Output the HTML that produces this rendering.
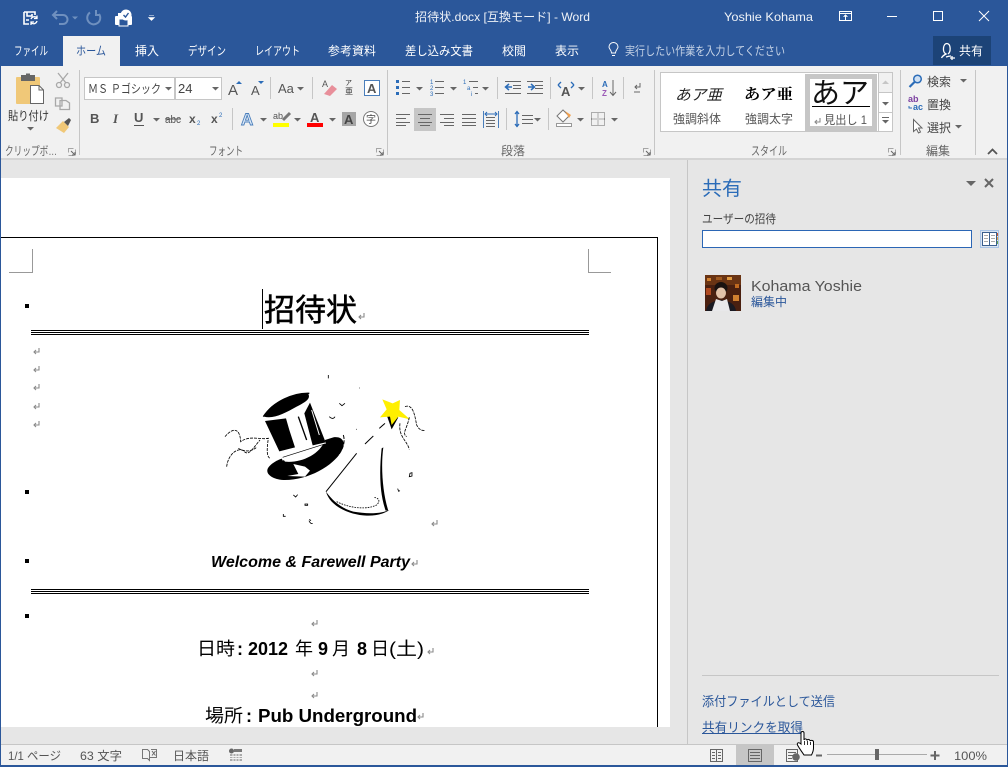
<!DOCTYPE html>
<html lang="ja"><head><meta charset="utf-8"><title>招待状.docx - Word</title>
<style>
html,body{margin:0;padding:0;background:#e6e6e6;width:1008px;height:767px;overflow:hidden}
svg{display:block;position:absolute;left:0;top:0}
text{font-family:"Liberation Sans","Noto Sans CJK JP",sans-serif;font-size:12px;fill:#444}
.w{fill:#fff}.b{fill:#2b579a}.k{fill:#000}
.tab{fill:#fff;font-size:12px}
.grp{fill:#666;font-size:12px}
.l{stroke:#666;fill:none;stroke-width:1}
.sep{stroke:#c6c6c6;stroke-width:1}
.ar{fill:#666}
.cr{fill:none;stroke:#999;stroke-width:1}
.d{font-size:18px;fill:#000}
.db{font-size:18px;font-weight:700;fill:#000}
</style></head><body>
<svg width="1008" height="767" viewBox="0 0 1008 767" xmlns="http://www.w3.org/2000/svg">
<defs>
<g id="ret"><path d="M6 0V4H1M3 2L1 4L3 6" fill="none" stroke="#8a8a8a" stroke-width="1.100"/></g>
<g id="lau"><path d="M.5 .5H7.5V7.5H.5Z" fill="none" stroke="#a5a5a5" stroke-dasharray="5 3"/><path d="M3 3L7 7M7 4V7H4" fill="none" stroke="#666"/></g>
<path id="da" d="M0 0H7L3.5 3.5Z" fill="#666"/>
</defs>
<!-- base -->
<rect width="1008" height="767" fill="#e6e6e6"/>
<rect width="1008" height="66" fill="#2b579a"/>
<rect y="66" width="1008" height="92" fill="#f1f1f1"/>
<rect y="158" width="1008" height="2" fill="#d4d4d4"/>
<rect x="63" y="36" width="57" height="30" fill="#f1f1f1"/>
<!-- QAT -->
<g fill="none" stroke="#fff" stroke-width="1.600">
<path d="M24 12H35V15M24 12V24H29M27 12V16H32V14M26 20H29"/>
<path d="M31 19A3.500 3.500 0 0 1 37 18M37 15.500V18.500H34M37 21A3.500 3.500 0 0 1 31.500 23M31 25V22H34" stroke-width="1.300"/>
</g>
<g fill="none" stroke="#6f90bf" stroke-width="2">
<path d="M54 15H63A4.500 4.500 0 0 1 63 24H59M57 11L53 15L57 19"/>
<path d="M90 12.500A6.500 6.500 0 1 0 99 14M96 10V15H100" />
</g>
<path d="M72 16.500H78L75 19.500Z" fill="#6f90bf"/>
<g>
<rect x="115" y="16" width="17" height="9" fill="#fff" rx="1"/>
<rect x="119" y="19" width="9" height="7" fill="#2b579a" stroke="#fff"/>
<rect x="118" y="13" width="6" height="4" fill="#fff"/>
<circle cx="126" cy="15" r="5.500" fill="#fff"/>
<path d="M123.500 15L125.500 17L128.500 13" fill="none" stroke="#2b579a" stroke-width="1.400"/>
</g>
<path d="M149 15.500H154M148.500 17.500H154.500L151.500 20.500Z" fill="#fff" stroke="#fff" stroke-width=".6"/>
<!-- title -->
<text x="415" y="21" class="w" textLength="175" lengthAdjust="spacingAndGlyphs" fill-opacity=".92">招待状.docx [互換モード] - Word</text>
<text x="724" y="21" class="w" textLength="89" lengthAdjust="spacingAndGlyphs" fill-opacity=".92">Yoshie Kohama</text>
<g fill="none" stroke="#fff" shape-rendering="crispEdges">
<path d="M839.500 11.500H851.500V20.500H839.500ZM839.500 13.500H851.500M845.500 20V15.500M843.500 17L845.500 15L847.500 17"/>
<path d="M887 16.500H897"/>
<rect x="933.500" y="11.500" width="9" height="9"/>
</g>
<path d="M979 11L989 21M989 11L979 21" stroke="#fff" fill="none"/>
<!-- tabs -->
<text x="14" y="55" class="tab" textLength="34" lengthAdjust="spacingAndGlyphs">ファイル</text>
<text x="76" y="55" class="b" textLength="30" lengthAdjust="spacingAndGlyphs">ホーム</text>
<text x="135" y="55" class="tab" textLength="24" lengthAdjust="spacingAndGlyphs">挿入</text>
<text x="188" y="55" class="tab" textLength="38" lengthAdjust="spacingAndGlyphs">デザイン</text>
<text x="255" y="55" class="tab" textLength="45" lengthAdjust="spacingAndGlyphs">レイアウト</text>
<text x="328" y="55" class="tab" textLength="48" lengthAdjust="spacingAndGlyphs">参考資料</text>
<text x="405" y="55" class="tab" textLength="68" lengthAdjust="spacingAndGlyphs">差し込み文書</text>
<text x="502" y="55" class="tab" textLength="24" lengthAdjust="spacingAndGlyphs">校閲</text>
<text x="555" y="55" class="tab" textLength="24" lengthAdjust="spacingAndGlyphs">表示</text>
<path d="M611.500 53C611.500 50 609 49 609 47A4.500 4.500 0 0 1 618 47C618 49 615.500 50 615.500 53ZM612 55.500H615" fill="none" stroke="#fff"/>
<text x="625" y="55" style="fill:#c6d3e6" textLength="160" lengthAdjust="spacingAndGlyphs">実行したい作業を入力してください</text>
<rect x="933" y="36" width="58" height="29" fill="#1c4377"/>
<path d="M948 54C951 52 951 44 947 43.500C943 43.500 942 52 946 54C944 55 942.500 56 941.500 58M946 57C949 56 951 56 951 56M952 56V60M950 58H955" fill="none" stroke="#fff" stroke-width="1.300"/>
<text x="959" y="55" class="w" textLength="24" lengthAdjust="spacingAndGlyphs">共有</text>
<!-- clipboard group -->
<rect x="16" y="77" width="24" height="27" fill="#f0c878" rx="1"/>
<rect x="21" y="75" width="14" height="6" fill="#666"/><rect x="26" y="73.500" width="4" height="3" fill="#666"/>
<path d="M30.500 85.500H39L43.500 90V103.500H30.500Z" fill="#fff" stroke="#666"/>
<path d="M39 86V90H43" fill="none" stroke="#666"/>
<text x="8" y="120" style="fill:#333" textLength="41" lengthAdjust="spacingAndGlyphs">貼り付け</text>
<use href="#da" x="27" y="127"/>
<g fill="none" stroke="#a8a8a8" stroke-width="1.300">
<path d="M58 73L66 83M68 73L60 83"/><circle cx="59" cy="85" r="2.500"/><circle cx="67" cy="85" r="2.500"/>
<path d="M55.500 98H62L62 106H55.500ZM60 100.500H66L69.500 103V109.500H60Z" fill="#f1f1f1"/>
</g>
<path d="M56 128L63 121L69 127L64 133Z" fill="#f0c878"/><path d="M64 122L69 118L71 120L68 126Z" fill="#555"/>
<text x="5" y="155" class="grp" textLength="52" lengthAdjust="spacingAndGlyphs">クリップボ…</text>
<use href="#lau" x="68" y="148"/>
<g shape-rendering="crispEdges">
<path class="sep" d="M79.500 70V155M387.500 70V155M654.500 70V155M900.500 70V155M975.500 70V155"/>
<path class="sep" d="M270.500 77V99M312.500 77V99M232.500 108V130M497.500 77V99M550.500 77V99M592.500 77V99M623.500 77V99M506.500 108V130M548.500 108V130"/>
<rect x="84.500" y="77.500" width="90" height="22" fill="#fff" stroke="#c6c6c6"/>
<rect x="175.500" y="77.500" width="46" height="22" fill="#fff" stroke="#c6c6c6"/>
</g>
<text x="88" y="93" textLength="73" lengthAdjust="spacingAndGlyphs">ＭＳ Ｐゴシック</text>
<use href="#da" x="165" y="87"/>
<text x="178" y="93" style="font-size:13px">24</text>
<use href="#da" x="212" y="87"/>
<!-- font row1 -->
<text x="228" y="95" style="font-size:15px;fill:#555">A</text>
<path d="M236 84H242L239 81Z" fill="#2b6cb8"/>
<text x="251" y="95" style="font-size:13px;fill:#555">A</text>
<path d="M258 81H264L261 84Z" fill="#2b6cb8"/>
<text x="278" y="93" style="font-size:13px;fill:#555">Aa</text>
<use href="#da" x="297" y="87"/>
<text x="322" y="87" style="font-size:9px;fill:#555">A</text>
<path d="M324 94L332 85L337 89L330 96Z" fill="#e88f9a"/>
<text x="345" y="85" style="font-size:7px;fill:#333">ア</text>
<text x="345" y="94" style="font-size:8px;fill:#333">亜</text>
<rect x="364.500" y="80.500" width="15" height="15" fill="#fff" stroke="#4a7ebb"/>
<text x="367" y="93" style="font-size:13px;font-weight:700;fill:#555">A</text>
<!-- font row2 -->
<text x="90" y="123" style="font-size:13px;font-weight:700;fill:#555">B</text>
<text x="113" y="123" style="font-size:13px;font-style:italic;font-weight:700;font-family:'Liberation Serif',serif;fill:#555">I</text>
<text x="134" y="122" style="font-size:13px;font-weight:700;fill:#555">U</text>
<path d="M134 125.500H144" stroke="#555"/>
<use href="#da" x="153" y="118"/>
<text x="165" y="123" style="font-size:11px;fill:#555" textLength="16" lengthAdjust="spacingAndGlyphs">abc</text>
<path d="M165 119H181" stroke="#555"/>
<text x="189" y="123" style="font-size:12px;font-weight:700;fill:#555">x</text><text x="197" y="125" style="font-size:6px;fill:#2b6cb8">2</text>
<text x="211" y="123" style="font-size:12px;font-weight:700;fill:#555">x</text><text x="219" y="117" style="font-size:6px;fill:#2b6cb8">2</text>
<text x="241" y="125" style="font-size:17px;font-weight:700;fill:#dce9f7;stroke:#4a7ebb;stroke-width:.9">A</text>
<use href="#da" x="260" y="118"/>
<text x="273" y="119" style="font-size:9px;fill:#555">ab</text>
<path d="M283 120L290 113" stroke="#777" stroke-width="3"/>
<rect x="273" y="123" width="16" height="4" fill="#ff0"/>
<use href="#da" x="294" y="118"/>
<text x="310" y="122" style="font-size:13px;font-weight:700;fill:#555">A</text>
<rect x="307" y="123" width="16" height="4" fill="#f00"/>
<use href="#da" x="329" y="118"/>
<rect x="342" y="112" width="14" height="14" fill="#a6a6a6"/>
<text x="344" y="124" style="font-size:13px;font-weight:700;fill:#444">A</text>
<circle cx="371" cy="119" r="7.500" fill="#fff" stroke="#777"/>
<text x="366" y="123" style="font-size:10px;fill:#444">字</text>
<!-- paragraph row1 -->
<g shape-rendering="crispEdges">
<path class="l" d="M402 81.500H410M402 87.500H410M402 93.500H410M435 81.500H444M435 87.500H444M435 93.500H444M469 81.500H478M473 87.500H478M475 93.500H478"/>
<rect x="396" y="80" width="3" height="3" fill="#2b6cb8"/><rect x="396" y="86" width="3" height="3" fill="#2b6cb8"/><rect x="396" y="92" width="3" height="3" fill="#2b6cb8"/>
</g>
<text x="430" y="84" style="font-size:6px;fill:#2b6cb8">1</text><text x="430" y="90" style="font-size:6px;fill:#2b6cb8">2</text><text x="430" y="96" style="font-size:6px;fill:#2b6cb8">3</text>
<text x="463" y="84" style="font-size:6px;fill:#2b6cb8">1</text><text x="467" y="90" style="font-size:6px;fill:#2b6cb8">a</text><text x="471" y="96" style="font-size:6px;fill:#2b6cb8">i</text>
<use href="#da" x="416" y="87"/><use href="#da" x="450" y="87"/><use href="#da" x="482" y="87"/>
<g shape-rendering="crispEdges"><path class="l" d="M505 81.500H521M513 85.500H521M513 88.500H521M505 93.500H521M527 81.500H543M535 85.500H543M535 88.500H543M527 93.500H543"/></g>
<path d="M512 87H506M509 84L505.500 87L509 90" fill="none" stroke="#2b6cb8" stroke-width="1.500"/>
<path d="M528 87H534M531 84L534.500 87L531 90" fill="none" stroke="#2b6cb8" stroke-width="1.500"/>
<text x="561" y="96" style="font-size:13px;font-weight:700;fill:#555">A</text>
<path d="M558 85L561 82M558 85L561 88M574 85L571 82M574 85L571 88" fill="none" stroke="#2b6cb8" stroke-width="1.300"/>
<use href="#da" x="578" y="87"/>
<text x="602" y="87" style="font-size:8px;font-weight:700;fill:#2b6cb8">A</text>
<text x="602" y="96" style="font-size:8px;font-weight:700;fill:#9b59b6">Z</text>
<path d="M613 80V95M610 92L613 95.500L616 92" fill="none" stroke="#666"/>
<path d="M640 83V87H635M637 85L635 87L637 89M634 92H640" fill="none" stroke="#666"/>
<!-- paragraph row2 -->
<rect x="414" y="108" width="22" height="23" fill="#c6c6c6"/>
<g shape-rendering="crispEdges">
<path class="l" d="M396 114.500H410M396 118.500H406M396 122.500H410M396 125.500H406M418 114.500H432M420 118.500H430M418 122.500H432M420 125.500H430M440 114.500H454M444 118.500H454M440 122.500H454M444 125.500H454M462 114.500H476M462 118.500H476M462 122.500H476M462 125.500H476"/>
<path class="l" d="M486 117.500H495M486 120.500H495M486 123.500H495M486 126.500H495M522 115.500H533M522 119.500H533M522 123.500H533"/>
<path d="M483.500 111V128M498.500 111V128" stroke="#4a7ebb" fill="none"/>
</g>
<path d="M485 114H497M487 112L485 114L487 116M495 112L497 114L495 116" fill="none" stroke="#2b6cb8"/>
<path d="M517 112V127M515 114L517 111.500L519 114M515 124L517 126.500L519 124" fill="none" stroke="#2b6cb8" stroke-width="1.300"/>
<use href="#da" x="534" y="118"/>
<path d="M557 116L563 110L569 116L563 122Z" fill="#fff" stroke="#777"/><path d="M565 111L571 115L569 118Z" fill="#f0a050"/>
<rect x="556.500" y="123.500" width="15" height="3" fill="#fff" stroke="#999"/>
<use href="#da" x="577" y="118"/>
<path d="M591.500 112.500H604.500V125.500H591.500ZM598 112.500V125.500M591.500 119H604.500" fill="none" stroke="#666" stroke-dasharray="1 1" shape-rendering="crispEdges"/>
<use href="#da" x="611" y="118"/>
<text x="501" y="155" class="grp" textLength="24" lengthAdjust="spacingAndGlyphs">段落</text>
<text x="209" y="155" class="grp" textLength="34" lengthAdjust="spacingAndGlyphs">フォント</text>
<use href="#lau" x="376" y="148"/>
<use href="#lau" x="643" y="148"/>
<!-- styles -->
<rect x="660.500" y="72.500" width="232" height="59" fill="#fff" stroke="#c6c6c6" shape-rendering="crispEdges"/>
<rect x="807.500" y="76.500" width="67" height="52" fill="#fff" stroke="#c6c6c6" stroke-width="5" shape-rendering="crispEdges"/>
<g shape-rendering="crispEdges">
<rect x="878.500" y="72.500" width="14" height="20" fill="#f1f1f1" stroke="#c6c6c6"/>
<rect x="878.500" y="92.500" width="14" height="20" fill="#fff" stroke="#c6c6c6"/>
<rect x="878.500" y="112.500" width="14" height="19" fill="#fff" stroke="#c6c6c6"/>
</g>
<path d="M882 84H889L885.500 80.500Z" fill="#c6c6c6"/>
<use href="#da" x="882" y="102"/>
<path d="M882 117.500H889" stroke="#666"/><use href="#da" x="882" y="120"/>
<text x="675" y="100" style="font-size:15px;font-style:italic;fill:#222" textLength="47" lengthAdjust="spacingAndGlyphs">あア亜</text>
<text x="673" y="123" style="fill:#555" textLength="48" lengthAdjust="spacingAndGlyphs">強調斜体</text>
<text x="744" y="99" style="font-size:15px;font-weight:700;font-family:'Noto Serif CJK SC','Liberation Serif',serif;fill:#000" textLength="49" lengthAdjust="spacingAndGlyphs">あア亜</text>
<text x="745" y="123" style="fill:#555" textLength="48" lengthAdjust="spacingAndGlyphs">強調太字</text>
<text x="811" y="103" style="font-size:29px;fill:#111" textLength="58" lengthAdjust="spacingAndGlyphs">あア</text>
<path d="M812 106.500H870" stroke="#000" shape-rendering="crispEdges"/>
<use href="#ret" x="814" y="118"/>
<text x="824" y="124" style="fill:#555" textLength="43" lengthAdjust="spacingAndGlyphs">見出し 1</text>
<text x="751" y="155" class="grp" textLength="36" lengthAdjust="spacingAndGlyphs">スタイル</text>
<use href="#lau" x="888" y="148"/>
<!-- edit -->
<circle cx="917.500" cy="79" r="3.800" fill="#cfe0f3" stroke="#2b6cb8" stroke-width="1.500"/>
<path d="M914.500 82L909.500 87" stroke="#2b6cb8" stroke-width="2.200"/>
<text x="927" y="86" style="fill:#444" textLength="24" lengthAdjust="spacingAndGlyphs">検索</text>
<use href="#da" x="960" y="79"/>
<text x="908" y="102" style="font-size:9px;font-weight:700;fill:#7b3fa0">ab</text>
<text x="913" y="110" style="font-size:9px;font-weight:700;fill:#2b6cb8">ac</text>
<path d="M909 106V108H912" fill="none" stroke="#2b6cb8"/>
<text x="927" y="109" style="fill:#444" textLength="24" lengthAdjust="spacingAndGlyphs">置換</text>
<path d="M913.500 119.500V131.500L916.500 129L918.500 133L920.500 132L918.500 128H922Z" fill="#fff" stroke="#666"/>
<text x="927" y="132" style="fill:#444" textLength="24" lengthAdjust="spacingAndGlyphs">選択</text>
<use href="#da" x="955" y="125"/>
<text x="926" y="155" class="grp" textLength="24" lengthAdjust="spacingAndGlyphs">編集</text>
<path d="M988 154L992.500 149.500L997 154" fill="none" stroke="#555" stroke-width="1.800"/>
<!-- document page -->
<rect x="1" y="178" width="669" height="549" fill="#fff"/>
<g shape-rendering="crispEdges">
<path d="M0 237.500H657.500V727" fill="none" stroke="#000"/>
<path class="cr" d="M32.500 249V272.500H9M588.500 249V272.500H611"/>
<path d="M31 330.500H589M31 332.500H589M31 334.500H589M31 589.500H589M31 591.500H589M31 593.500H589" stroke="#000"/>
<rect x="25" y="304" width="4" height="4" fill="#000"/>
<rect x="25" y="490" width="4" height="4" fill="#000"/>
<rect x="25" y="559" width="4" height="4" fill="#000"/>
<rect x="25" y="614" width="4" height="4" fill="#000"/>
<rect x="262" y="289" width="1" height="40" fill="#000"/>
</g>
<text x="264" y="321" class="k" style="font-size:31px;stroke:#000;stroke-width:.5" textLength="93" lengthAdjust="spacingAndGlyphs">招待状</text>
<use href="#ret" x="358" y="313"/>
<use href="#ret" x="33" y="348"/><use href="#ret" x="33" y="366"/><use href="#ret" x="33" y="384"/><use href="#ret" x="33" y="403"/><use href="#ret" x="33" y="421"/>
<use href="#ret" x="431" y="520"/>
<text x="211" y="567" class="k" style="font-size:16px;font-weight:700;font-style:italic" textLength="199" lengthAdjust="spacingAndGlyphs">Welcome &amp; Farewell Party</text>
<use href="#ret" x="411" y="560"/>
<use href="#ret" x="311" y="620"/>
<text x="197" y="655" class="d" textLength="38" lengthAdjust="spacingAndGlyphs">日時</text>
<text x="237" y="655" class="db">:</text>
<text x="248" y="655" class="db">2012</text>
<text x="295" y="655" class="d">年</text>
<text x="318" y="655" class="db">9</text>
<text x="332" y="655" class="d">月</text>
<text x="357" y="655" class="db">8</text>
<text x="371" y="655" class="d">日</text>
<text x="389" y="655" class="d" textLength="35" lengthAdjust="spacingAndGlyphs">(土)</text>
<use href="#ret" x="427" y="648"/>
<use href="#ret" x="311" y="670"/>
<use href="#ret" x="311" y="692"/>
<text x="205" y="722" class="d" textLength="38" lengthAdjust="spacingAndGlyphs">場所</text>
<text x="246" y="722" class="db">:</text>
<text x="258" y="722" class="db" textLength="159" lengthAdjust="spacingAndGlyphs">Pub Underground</text>
<use href="#ret" x="417" y="713"/>
<rect x="1" y="727" width="686" height="17" fill="#e6e6e6"/>
<!-- clip art -->
<g transform="translate(210 360) scale(.3333)">
<path d="M172 330C175 315 200 300 218 295L225 305C270 310 330 285 345 240L370 232C400 228 408 250 395 272C370 320 290 362 220 360C190 358 170 345 172 330Z" fill="#000"/>
<path d="M232 348L265 342L250 312L285 320L300 332L285 350Z" fill="#fff"/>
<path d="M165 178L300 122L348 250L218 302Z" fill="#fff"/>
<path d="M162 170C175 130 250 95 295 102C302 115 290 125 260 140C225 160 190 178 162 170Z" fill="#000"/>
<path d="M165 183L228 175L238 210L255 262L208 274Z" fill="#000"/>
<path d="M300 128L347 247L308 256L283 160Z" fill="#000"/>
<path d="M265 170L290 240" stroke="#000" stroke-width="4" fill="none"/>
<path d="M305 150L328 225" stroke="#fff" stroke-width="3" fill="none"/>
<path d="M218 292L345 252" stroke="#000" stroke-width="2" fill="none"/>
<path d="M160 170C190 125 250 98 298 100" stroke="#000" stroke-width="4" fill="none"/>
<path d="M400 225C408 250 395 280 370 300" stroke="#000" stroke-width="3" stroke-dasharray="12 4" fill="none"/>
<path d="M348 395L440 280" stroke="#000" stroke-width="3" fill="none"/>
<path d="M465 252L490 228M508 205L525 190" stroke="#000" stroke-width="3" fill="none"/>
<path d="M520 262C512 320 518 400 535 452L527 452C508 400 508 330 515 265Z" fill="#000"/>
<path d="M348 395C360 440 420 465 470 467C500 468 525 460 538 450C510 462 470 462 430 455C395 445 370 425 348 395Z" fill="#000"/>
<path d="M380 425C420 445 470 450 500 435C510 425 510 415 492 412" stroke="#000" stroke-width="2.500" stroke-dasharray="5 3" fill="none"/>
<path d="M530 165L545 208L565 172Z" fill="#000"/>
<path d="M517 118L548 130L570 120L568 150L600 178L565 170L545 195L540 170L510 172L530 148Z" fill="#ffef00"/>
<path d="M585 140C610 130 615 170 620 195C630 215 640 210 645 212M570 190C565 230 590 240 598 268M598 172C590 210 575 220 590 230" stroke="#000" stroke-width="2.500" stroke-dasharray="9 3" fill="none"/>
<path d="M45 230C70 200 90 205 92 245C120 225 150 240 175 235C170 270 170 290 180 295M50 320C55 280 85 262 100 272C115 290 125 270 150 240M85 265C110 280 130 270 140 262" stroke="#000" stroke-width="2.500" stroke-dasharray="9 3" fill="none"/>
<path d="M388 130L396 137L405 130M358 170C365 178 372 176 375 170M250 405L257 411L263 404M285 432H293V436H285ZM220 462V469H227M297 482C300 490 305 492 308 490M298 478L303 482M600 340L606 338V348L598 350ZM563 386L566 394L570 392M355 45V55M448 84H450M438 208H440" stroke="#000" stroke-width="2.500" fill="none"/>
</g>
<!-- task pane -->
<path class="sep" d="M687.500 160V744" shape-rendering="crispEdges"/>
<text x="702" y="195" style="font-size:19.500px;fill:#2b6cb8" textLength="40" lengthAdjust="spacingAndGlyphs">共有</text>
<path d="M966 181H976L971 186Z" fill="#666"/>
<path d="M985 179L993 187M993 179L985 187" stroke="#666" stroke-width="2"/>
<text x="702" y="223" style="fill:#444" textLength="74" lengthAdjust="spacingAndGlyphs">ユーザーの招待</text>
<rect x="702.500" y="230.500" width="269" height="17" fill="#fff" stroke="#2b66b5" shape-rendering="crispEdges"/>
<g shape-rendering="crispEdges">
<rect x="980.500" y="230.500" width="18" height="17" fill="#dbe5f1" stroke="#a9c4e6"/>
<rect x="982.500" y="232.500" width="14" height="13" fill="#fff" stroke="#3a5f8f"/>
<path d="M989.500 233V245" stroke="#3a5f8f"/>
<path d="M984 235.500H988M984 238.500H988M984 241.500H988M991 235.500H995M991 238.500H995M991 241.500H995" stroke="#aaa"/>
<rect x="997" y="233" width="1" height="3" fill="#d2572b"/><rect x="997" y="237" width="1" height="3" fill="#e6a23c"/><rect x="997" y="241" width="1" height="3" fill="#6aa84f"/>
</g>
<!-- avatar -->
<rect x="705" y="275" width="36" height="36" fill="#4a2010"/>
<rect x="705" y="275" width="36" height="10" fill="#6a3414"/>
<rect x="707" y="278" width="4" height="3" fill="#d08030"/><rect x="727" y="277" width="5" height="3" fill="#e09a40"/><rect x="735" y="284" width="4" height="4" fill="#c06a20"/><rect x="706" y="288" width="5" height="7" fill="#b04a20"/><rect x="733" y="295" width="6" height="6" fill="#d08030"/><rect x="716" y="277" width="6" height="3" fill="#a05a20"/>
<ellipse cx="721" cy="288" rx="6.500" ry="6" fill="#1a1210"/>
<ellipse cx="721" cy="293" rx="5" ry="5.500" fill="#e2c2a8"/>
<path d="M706 311C707 304 712 301 721 300C730 301 735 304 736 311Z" fill="#1a1a22"/>
<path d="M712 311L716 299L722 301L727 299L730 311Z" fill="#e8e8ea"/>
<text x="751" y="291" style="font-size:15px;fill:#555" textLength="111" lengthAdjust="spacingAndGlyphs">Kohama Yoshie</text>
<text x="751" y="306" class="b" textLength="36" lengthAdjust="spacingAndGlyphs">編集中</text>
<path class="sep" d="M702 675.500H999" shape-rendering="crispEdges"/>
<text x="702" y="706" style="font-size:13px;fill:#2b579a" textLength="133" lengthAdjust="spacingAndGlyphs">添付ファイルとして送信</text>
<text x="702" y="732" style="font-size:13px;fill:#2b579a" textLength="101" lengthAdjust="spacingAndGlyphs">共有リンクを取得</text>
<path d="M702 733.500H803" stroke="#2b579a" shape-rendering="crispEdges"/>
<!-- status bar -->
<rect y="744" width="1008" height="21" fill="#f1f1f1"/>
<path d="M0 744.500H1008" stroke="#c6c6c6" shape-rendering="crispEdges"/>
<text x="8" y="760" style="fill:#555" textLength="53" lengthAdjust="spacingAndGlyphs">1/1 ページ</text>
<text x="80" y="760" style="fill:#555" textLength="42" lengthAdjust="spacingAndGlyphs">63 文字</text>
<path d="M142.500 749.500H147.500L149.500 751.500V760.500L147.500 758.500H142.500ZM151 749.500H156.500V757.500H150" fill="none" stroke="#777" shape-rendering="crispEdges"/>
<path d="M152 751L155.500 755.500M155.500 751L152 755.500" stroke="#666" fill="none"/>
<text x="173" y="760" style="fill:#555" textLength="36" lengthAdjust="spacingAndGlyphs">日本語</text>
<circle cx="231.500" cy="751" r="2.500" fill="#666"/>
<rect x="234" y="749" width="8" height="3" fill="#777"/>
<rect x="230" y="754" width="12" height="7" fill="#aaa"/>
<path d="M230 756.500H242M230 758.500H242M233 754V761M236 754V761M239 754V761" stroke="#f1f1f1" shape-rendering="crispEdges"/>
<rect x="736" y="745" width="38" height="20" fill="#c6c6c6"/>
<g shape-rendering="crispEdges" fill="none" stroke="#666">
<path d="M710.500 749.500H722.500V761.500H710.500ZM716.500 749.500V761.500M712 752.500H715M712 755.500H715M712 758.500H715M718 752.500H721M718 755.500H721M718 758.500H721"/>
<path d="M748.500 749.500H761.500V761.500H748.500ZM750 752.500H760M750 755.500H760M750 758.500H760"/>
<path d="M786.500 749.500H797.500V761.500H786.500ZM788 752.500H796M788 755.500H794M788 758.500H792"/>
</g>
<circle cx="796" cy="757" r="3.800" fill="#666"/>
<path d="M816 755.500H822M935 751V760M930.500 755.500H939.500" stroke="#666" stroke-width="2"/>
<path d="M827 754.500H927" stroke="#aaa" shape-rendering="crispEdges"/>
<rect x="875" y="749" width="4" height="11" fill="#666"/>
<text x="954" y="760" style="fill:#555" textLength="33" lengthAdjust="spacingAndGlyphs">100%</text>
<!-- window border -->
<rect x="0" y="66" width="1" height="701" fill="#2b579a"/>
<rect x="1007" y="66" width="1" height="701" fill="#2b579a"/>
<rect x="0" y="765" width="1008" height="2" fill="#2b579a"/>
<!-- hand cursor -->
<path d="M801 733C801 731 804 731 804 733V740C804.500 738.500 807 738.500 807 740.500C807.500 739 810 739 810 741C810.500 740 813.500 740 813.500 742V748C813.500 751 812.500 753 811.500 755H804C802 752 799 748 797.500 745C796.500 742.500 799 742 801 744Z" fill="#fff" stroke="#000" stroke-width="1"/>
<path d="M804.500 741V745M807.500 741V745M810.500 742V745" stroke="#000" stroke-width=".8" fill="none"/>
</svg>
</body></html>
